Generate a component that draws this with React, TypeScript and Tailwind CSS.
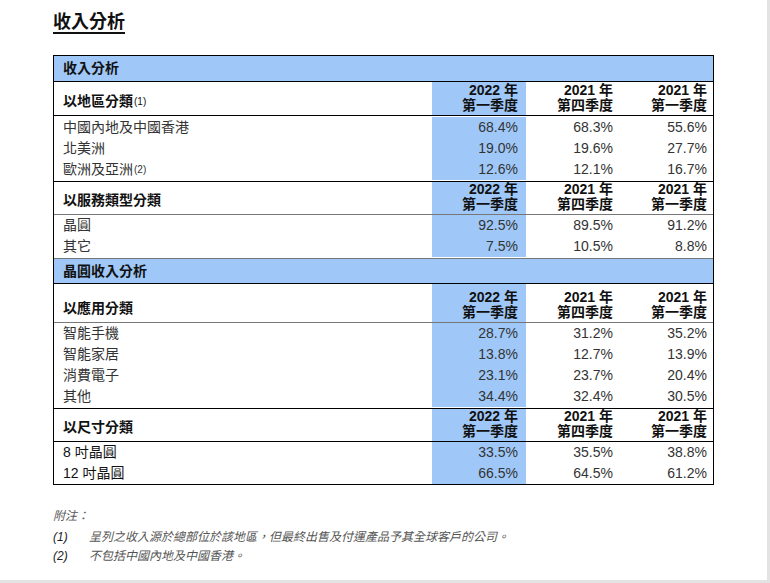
import React from 'react';

const FONT = { fontFamily: '"Liberation Sans", Arial, "Noto Sans CJK TC", sans-serif' };

type Row = { label: React.ReactNode; values: [string, string, string] };

const HEAD: [string, string][] = [
  ['2022 年', '第一季度'],
  ['2021 年', '第四季度'],
  ['2021 年', '第一季度'],
];

const COLS = 'grid grid-cols-[378px_94px_95px_94px]';

const Sup = ({ n }: { n: number }) => (
  <sup className="text-[10px] font-normal relative -top-[1px] ml-[1px]">({n})</sup>
);

// heights below include the bottom border (border-box)
const Band = ({ title, height, border }: { title: string; height: string; border: string }) => (
  <div className={`${height} bg-[#9fc8f8] flex items-center pl-[9px] text-[14px] font-bold text-[#111] ${border}`}>
    {title}
  </div>
);

const HeaderRow = ({ label, height, border }: { label: React.ReactNode; height: string; border: string }) => (
  <div className={`${COLS} ${height} ${border}`}>
    <div className="flex items-end pl-[9px] pb-[3px] text-[14px] font-bold text-[#111]">{label}</div>
    {HEAD.map(([a, b], i) => (
      <div
        key={i}
        className={`flex flex-col items-end justify-end pr-[8px] pb-[2px] text-[14px] font-bold leading-[15px] text-[#111] ${i === 0 ? 'bg-[#9fc8f8]' : ''}`}
      >
        <span>{a}</span>
        <span>{b}</span>
      </div>
    ))}
  </div>
);

const DataRows = ({ rows, border }: { rows: Row[]; border: string }) => (
  <div className={border}>
    {rows.map((r, i) => (
      <div key={i} className={`${COLS} h-[21px] text-[14px] text-[#333]`}>
        <div className="flex items-center pl-[9px]">{r.label}</div>
        {r.values.map((v, j) => (
          <div key={j} className={`flex items-center justify-end pr-[8px] ${j === 0 ? 'bg-[#9fc8f8]' : ''}`}>
            {v}
          </div>
        ))}
      </div>
    ))}
  </div>
);

export default function App() {
  return (
    <div className="w-[770px] h-[583px] bg-[#e3e3e3]" style={FONT}>
      <div className="w-[767px] h-[580px] bg-white pl-[53px] pt-[10px]">
        <h1 className="text-[18px] font-bold text-[#111] underline decoration-2 underline-offset-[4px] leading-[24px]">
          收入分析
        </h1>

        <div className="mt-[21px] w-[661px] border border-black">
          <Band title="收入分析" height="h-[26px]" border="border-b border-black" />
          <HeaderRow
            label={<span>以地區分類<Sup n={1} /></span>}
            height="h-[34px]"
            border="border-b border-black"
          />
          <DataRows
            border="border-b border-black pt-[1px] pb-[1px]"
            rows={[
              { label: '中國內地及中國香港', values: ['68.4%', '68.3%', '55.6%'] },
              { label: '北美洲', values: ['19.0%', '19.6%', '27.7%'] },
              { label: <span>歐洲及亞洲<Sup n={2} /></span>, values: ['12.6%', '12.1%', '16.7%'] },
            ]}
          />
          <HeaderRow label="以服務類型分類" height="h-[33px]" border="border-b border-[#777]" />
          <DataRows
            border="border-b border-[#777] pb-[1px]"
            rows={[
              { label: '晶圓', values: ['92.5%', '89.5%', '91.2%'] },
              { label: '其它', values: ['7.5%', '10.5%', '8.8%'] },
            ]}
          />
          <Band title="晶圓收入分析" height="h-[25px]" border="border-b border-black" />
          <HeaderRow label="以應用分類" height="h-[39px]" border="border-b border-[#777]" />
          <DataRows
            border="border-b border-black pb-[1px]"
            rows={[
              { label: '智能手機', values: ['28.7%', '31.2%', '35.2%'] },
              { label: '智能家居', values: ['13.8%', '12.7%', '13.9%'] },
              { label: '消費電子', values: ['23.1%', '23.7%', '20.4%'] },
              { label: '其他', values: ['34.4%', '32.4%', '30.5%'] },
            ]}
          />
          <HeaderRow label="以尺寸分類" height="h-[33px]" border="border-b border-black" />
          <DataRows
            border=""
            rows={[
              { label: <span className="text-[#111]">8 吋晶圓</span>, values: ['33.5%', '35.5%', '38.8%'] },
              { label: <span className="text-[#111]">12 吋晶圓</span>, values: ['66.5%', '64.5%', '61.2%'] },
            ]}
          />
        </div>

        <div className="mt-[22px] text-[12px] italic text-[#555] leading-[19px]">
          <p>附注：</p>
          <p className="mt-[2px] flex">
            <span className="w-[36px] text-[#222]">(1)</span>
            <span>呈列之收入源於總部位於該地區，但最終出售及付運產品予其全球客戶的公司。</span>
          </p>
          <p className="flex">
            <span className="w-[36px] text-[#222]">(2)</span>
            <span>不包括中國內地及中國香港。</span>
          </p>
        </div>
      </div>
    </div>
  );
}
